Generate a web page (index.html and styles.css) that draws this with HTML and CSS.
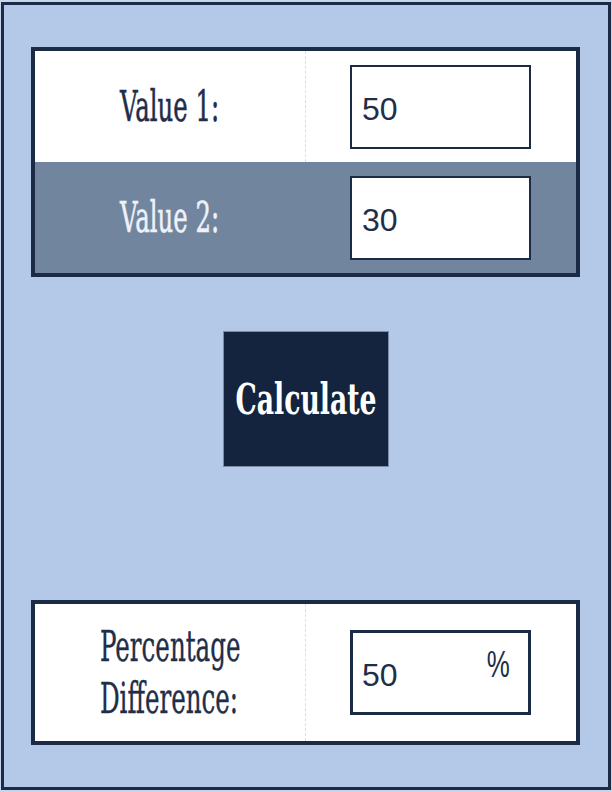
FILE: index.html
```html
<!DOCTYPE html>
<html lang="en">
<head>
    <meta charset="UTF-8">
    <meta name="viewport" content="width=device-width, initial-scale=1.0">
    <title>Percentage Difference</title>
    <link rel="stylesheet" href="styles.css">
</head>
<body>
    <div class="frame">
        <div class="panel inputs">
            <div class="row">
                <div class="cell label-cell"><span class="label">Value 1:</span></div>
                <div class="cell field-cell"><input type="text" class="field" id="value1" value="50"></div>
            </div>
            <div class="row shaded">
                <div class="cell label-cell"><span class="label">Value 2:</span></div>
                <div class="cell field-cell"><input type="text" class="field" id="value2" value="30"></div>
            </div>
        </div>

        <div class="actions">
            <button type="button" class="calc" id="calcBtn"><span>Calculate</span></button>
        </div>

        <div class="panel result">
            <div class="row tall">
                <div class="cell label-cell"><span class="label multi">Percentage<br>Difference:</span></div>
                <div class="cell field-cell">
                    <div class="field output">
                        <span class="num" id="result">50</span>
                        <span class="unit">%</span>
                    </div>
                </div>
            </div>
        </div>
    </div>

    <script>
        document.getElementById("calcBtn").addEventListener("click", function() {
            let a = parseFloat(document.getElementById("value1").value);
            let b = parseFloat(document.getElementById("value2").value);
            let out = document.getElementById("result");
            if (isNaN(a) || isNaN(b) || a + b === 0) {
                out.textContent = "";
                return;
            }
            let diff = Math.abs(a - b) / ((a + b) / 2) * 100;
            out.textContent = Math.round(diff * 100) / 100;
        });
    </script>
</body>
</html>
```

FILE: styles.css
```css
* { margin: 0; padding: 0; box-sizing: border-box; }
body {
    background: #c6d5ea;
    padding: 2px 1px;
    font-family: 'DejaVu Serif', serif;
    color: #1f2e49;
}
.frame {
    height: 788px;
    border: 3px solid #1c2b45;
    background: #b4c9e8;
    padding: 42px 28px 0 27px;
}
.panel {
    border: 4px solid #1c2b45;
    background: #fff;
}
.row {
    display: grid;
    grid-template-columns: 270px 1fr;
    height: 111px;
}
.row.tall { height: 137px; }
.shaded { background: #72859f; }
.cell {
    display: flex;
    align-items: center;
}
.label-cell { justify-content: center; }
.field-cell {
    border-left: 1px dashed #dedede;
    padding-left: 44px;
}
.shaded .field-cell { border-left-color: transparent; }

/* labels are drawn tall and narrow */
.label {
    display: inline-block;
    font-size: 42px;
    line-height: 1;
    transform: scaleX(0.58);
    white-space: nowrap;
    -webkit-text-stroke: 0.6px currentColor;
}
.shaded .label { color: #eef2f8; }
.label.multi {
    line-height: 52px;
    text-align: left;
    transform: scaleX(0.585);
    -webkit-text-stroke: 0.4px currentColor;
}

.field {
    width: 181px;
    height: 84px;
    border: 2px solid #1c2b45;
    background: #fff;
    padding: 6px 0 0 10px;
    font-family: 'Liberation Sans', sans-serif;
    font-size: 32px;
    color: #1f2e49;
    outline: none;
}
.output {
    height: 85px;
    border-width: 3px;
    padding: 0 18px 0 9px;
    display: flex;
    justify-content: space-between;
    align-items: center;
}
.num { padding-top: 6px; }
.unit {
    align-self: flex-start;
    margin-top: 13px;
    font-size: 37px;
    line-height: 1;
    display: inline-block;
    transform: scaleX(0.7);
    transform-origin: right center;
}

.actions {
    display: flex;
    justify-content: center;
    margin: 54px 0 133px;
}
.calc {
    width: 166px;
    height: 136px;
    padding: 0;
    display: flex;
    justify-content: center;
    align-items: center;
    background: #14243e;
    border: 1px solid #7b8ca5;
    color: #fff;
    font-family: 'DejaVu Serif', serif;
    font-weight: bold;
    font-size: 42px;
    cursor: pointer;
}
.calc span {
    display: inline-block;
    flex-shrink: 0;
    transform: scaleX(0.635);
    white-space: nowrap;
}
.result { height: 145px; }
```
